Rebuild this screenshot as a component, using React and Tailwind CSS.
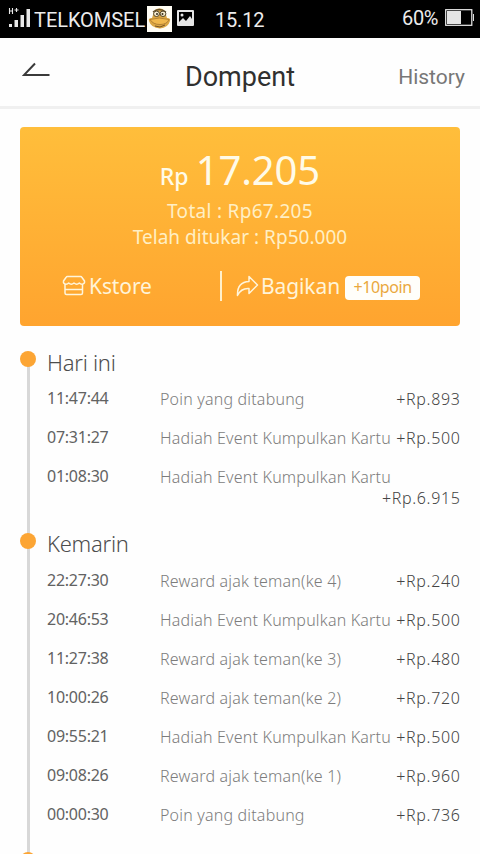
import React from "react";

const days = [
  {
    label: "Hari ini",
    rows: [
      ["11:47:44", "Poin yang ditabung", "+Rp.893"],
      ["07:31:27", "Hadiah Event Kumpulkan Kartu", "+Rp.500"],
      ["01:08:30", "Hadiah Event Kumpulkan Kartu", "+Rp.6.915", true],
    ],
  },
  {
    label: "Kemarin",
    rows: [
      ["22:27:30", "Reward ajak teman(ke 4)", "+Rp.240"],
      ["20:46:53", "Hadiah Event Kumpulkan Kartu", "+Rp.500"],
      ["11:27:38", "Reward ajak teman(ke 3)", "+Rp.480"],
      ["10:00:26", "Reward ajak teman(ke 2)", "+Rp.720"],
      ["09:55:21", "Hadiah Event Kumpulkan Kartu", "+Rp.500"],
      ["09:08:26", "Reward ajak teman(ke 1)", "+Rp.960"],
      ["00:00:30", "Poin yang ditabung", "+Rp.736"],
    ],
  },
  { label: "", rows: [] },
];

function StatusBar() {
  return (
    <div className="flex h-[38px] shrink-0 items-start bg-black font-['Roboto',sans-serif] text-[20px] leading-[24px] text-[#ececec]">
      <svg className="ml-[8px] mt-[7px] h-[21px] w-[24px] shrink-0" viewBox="0 0 24 21" fill="#e8e8e8">
        <path d="M1.500 1v6M4.500 1v6M1.500 4h3M6.500 3h4M8.500 1v4" stroke="#e8e8e8" strokeWidth="1.1" fill="none" />
        <rect x="1" y="17" width="3" height="3" />
        <rect x="6.500" y="13" width="3.500" height="7" />
        <rect x="12.500" y="8" width="3.500" height="12" />
        <rect x="18.500" y="2" width="3.500" height="18" />
      </svg>
      <span className="ml-[2px] mt-[8px] w-[113px] shrink-0 whitespace-nowrap tracking-[-0.05px]">TELKOMSEL</span>
      <svg className="mt-[6px] h-[26px] w-[25px] shrink-0" viewBox="0 0 25 26">
        <rect width="25" height="26" fill="#fffdf5" />
        <path d="M6 9Q7 2 12.500 2.500 18 2 19 9l1 3q4 0 3 3-2 7-10 7.500Q4 22 2 15q-1-3 3-3z" fill="#dba744" />
        <path d="M6 6Q12 1 19 6" stroke="#65502a" strokeWidth="1.500" fill="none" />
        <ellipse cx="9.500" cy="7.800" rx="2.900" ry="2.700" fill="#f8eed0" stroke="#51442b" />
        <ellipse cx="16" cy="7.800" rx="2.900" ry="2.700" fill="#f8eed0" stroke="#51442b" />
        <circle cx="10" cy="8" r="1" fill="#352b1b" />
        <circle cx="15.500" cy="8" r="1" fill="#352b1b" />
        <path d="M3 13.500q9-3 19 0-2 5-9 5t-10-5z" fill="#f0b84d" stroke="#a6752d" strokeWidth=".8" />
        <path d="M8 20l5 1 5-2" stroke="#765323" fill="none" />
      </svg>
      <svg className="ml-[5px] mt-[9px] h-[18px] w-[17px] shrink-0" viewBox="0 0 17 18">
        <path fillRule="evenodd" fill="#e5e5e5" d="M1 1h15q1 0 1 1v14q0 1-1 1H1q-1 0-1-1V2q0-1 1-1zM2 3v10l4-4 3 3 4-5 2 3V3z" />
        <circle cx="5" cy="6" r="1.500" fill="#e5e5e5" />
      </svg>
      <span className="ml-[21px] mt-[8px] whitespace-nowrap tracking-[-0.2px]">15.12</span>
      <span className="ml-auto mt-[6px] whitespace-nowrap tracking-[-0.4px]">60%</span>
      <svg className="ml-[7px] mr-[5px] mt-[9px] h-[17px] w-[30px] shrink-0" viewBox="0 0 30 17">
        <rect x=".7" y=".7" width="26.100" height="15.600" fill="none" stroke="#eee" strokeWidth="1.200" />
        <rect x="2" y="2" width="14" height="13" fill="#e5e5e5" />
        <path d="M28.500 5v7" stroke="#ddd" />
      </svg>
    </div>
  );
}

function StoreIcon() {
  return (
    <svg className="h-[22px] w-[24px] shrink-0" viewBox="0 0 24 22" fill="none" stroke="#fff5dc" strokeWidth="1.500" strokeLinejoin="round" strokeLinecap="round">
      <path d="M5.500 1.500h13q1 0 1.500 1L22.500 6q.5 3-2.500 3.200-1.700 0-2.700-1.200Q16 9.200 14.700 9.200T12 8Q10.700 9.200 9.300 9.200T6.700 8Q5.700 9.200 4 9.200 1 9 1.500 6L4 2.500q.5-1 1.500-1zM3 9.500V18q0 1.500 1.500 1.500h14.500q1.500 0 1.500-1.500V9.500M3.500 14.500h16.500" />
    </svg>
  );
}

function ShareIcon() {
  return (
    <svg className="h-[22px] w-[23px] shrink-0" viewBox="0 0 23 22" fill="none" stroke="#fff5dc" strokeWidth="1.500" strokeLinejoin="round">
      <path d="M13 1.500 21.500 10 13 18.500v-5Q5 13 1.500 20.500 1 7 13 6.500z" />
    </svg>
  );
}

export default function App() {
  return (
    <div className="flex h-[854px] w-[480px] flex-col overflow-hidden bg-[#fefefe] font-['Noto_Sans',sans-serif]">
      <StatusBar />
      <header className="flex h-[71px] shrink-0 items-center justify-between border-b-[3px] border-[#f0f0f0] font-['Roboto',sans-serif]">
        <div className="w-[185px]">
          <svg className="mb-[4px] ml-[22px] h-[16px] w-[28px]" viewBox="0 0 28 16" fill="none" stroke="#3a3a3a" strokeWidth="2">
            <path d="M13 1.500 2 13h25.500" />
          </svg>
        </div>
        <h1 className="mt-[9px] text-[27px] leading-[32px] text-[#303030]">Dompent</h1>
        <span className="mt-[9px] w-[185px] pr-[15px] text-right text-[21px] leading-[26px] text-[#777777]">History</span>
      </header>

      <section className="mx-[20px] mt-[18px] flex h-[199px] shrink-0 flex-col items-center rounded-[4px] bg-linear-to-b from-[#ffbe3b] to-[#ffa42f] text-[#fff4d8]">
        <div className="mt-[16px] flex h-[54px] items-baseline whitespace-nowrap text-[#fffbe8]">
          <span className="mr-[7px] text-[23px] font-medium leading-[54px]">Rp</span>
          <span className="text-[40px] leading-[54px] tracking-[-0.1px]">17.205</span>
        </div>
        <p className="mt-px h-[26px] whitespace-nowrap text-[19px] leading-[27px] tracking-[0.3px] text-[#ffefc4]">Total : Rp67.205</p>
        <p className="h-[26px] whitespace-nowrap text-[19px] leading-[27px] tracking-[0.02px] text-[#ffefc4]">Telah ditukar : Rp50.000</p>
        <div className="mt-[20px] flex h-[32px] w-full items-center text-[21px] leading-[32px]">
          <div className="flex w-[200px] items-center pl-[42px]">
            <StoreIcon />
            <span className="ml-[3px] tracking-[-0.1px]">Kstore</span>
          </div>
          <span className="h-[30px] w-[2px] bg-[#fff0cc]" />
          <div className="ml-[14px] flex items-center whitespace-nowrap">
            <ShareIcon />
            <span className="ml-[2px] tracking-[-0.1px]">Bagikan</span>
          </div>
          <span className="ml-[5px] mt-[4px] h-[24px] w-[75px] rounded-[4px] bg-[#fffefa] text-center text-[16px] leading-[22px] tracking-[-0.4px] text-[#eaa83e]">+10poin</span>
        </div>
      </section>

      <main className="mt-[19px]">
        {days.map((day, i) => (
          <section key={i} className="flex pl-[20px] pr-[20px]">
            <div className="relative flex w-[27px] shrink-0 justify-start">
              <span className={i ? "ml-[7px] w-[3px] bg-[#d8d8d8]" : "ml-[7px] mt-[14px] w-[3px] bg-[#d8d8d8]"} />
              <span className={i === 2 ? "absolute left-0 top-[7px] h-[16px] w-[16px] rounded-full bg-[#fca534]" : "absolute left-0 top-[6px] h-[16px] w-[16px] rounded-full bg-[#fca534]"} />
            </div>
            <div className="flex-1 pb-[10px]">
              <h2 className={i ? "h-[35px] text-[22px] font-light leading-[33px] tracking-[-0.25px] text-[#4d4d4d]" : "h-[35px] text-[22px] font-light leading-[35px] tracking-[-0.25px] text-[#4d4d4d]"}>{day.label}</h2>
              {day.rows.map(([time, text, amount, wrapped]) => (
                <div key={time} className={wrapped ? "flex h-[59px] whitespace-nowrap" : "flex h-[39px] whitespace-nowrap"}>
                  <time className="w-[113px] shrink-0 text-[16px] leading-[37px] tracking-[-0.25px] text-[#626262]">{time}</time>
                  <div className={wrapped ? "flex flex-1 flex-col" : "flex flex-1 justify-between"}>
                    <span className={wrapped ? "h-[29px] text-[16px] font-light leading-[39px] tracking-[0.19px] text-[#7c7c7c]" : "text-[16px] font-light leading-[39px] tracking-[0.19px] text-[#7c7c7c]"}>{text}</span>
                    <span className={wrapped ? "mr-[-0.5px] self-end text-[16px] font-light leading-[22px] tracking-[0.65px] text-[#444444]" : "mr-[-0.5px] text-[16px] font-light leading-[39px] tracking-[0.65px] text-[#444444]"}>{amount}</span>
                  </div>
                </div>
              ))}
            </div>
          </section>
        ))}
      </main>
    </div>
  );
}
